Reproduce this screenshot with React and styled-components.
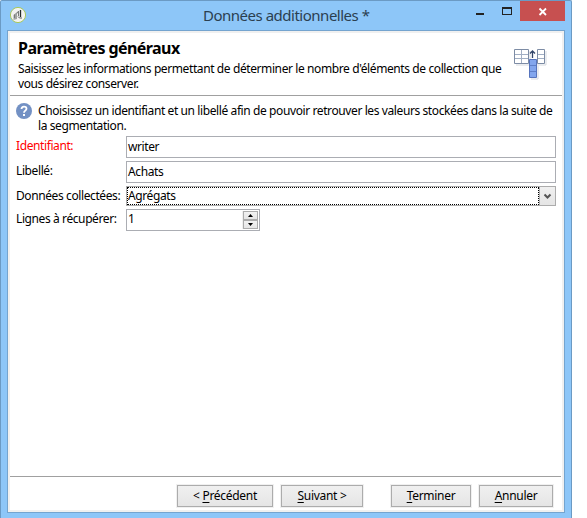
import React from "react";
import styled, { createGlobalStyle } from "styled-components";

const GlobalStyle = createGlobalStyle`
  * { box-sizing: border-box; }
  body {
    margin: 0;
    background: #fff;
    color: #000;
    font: 12px/15px "Noto Sans", "Open Sans", sans-serif;
    letter-spacing: -0.4px;
    overflow: hidden;
  }
`;

const Window = styled.div`
  width: 572px;
  height: 518px;
  display: flex;
  flex-direction: column;
  padding: 0 6px 5px;
  background: #8dc6f8;
  border: 1px solid #6b9ac4;
  border-bottom: 0;
  border-radius: 2px 2px 0 0;
`;

const TitleBar = styled.header`
  height: 29px;
  flex: none;
  display: flex;
  padding-left: 2px;
`;

const AppIcon = styled.svg`
  width: 18px;
  height: 18px;
  margin-top: 5px;
  flex: none;
`;

const Title = styled.h1`
  flex: 1;
  margin: 4px 0 0 176px;
  font: 400 15px/21px "Noto Sans", sans-serif;
  letter-spacing: -0.49px;
  color: #2b3f50;
  white-space: nowrap;
`;

const WindowControls = styled.div`
  display: flex;
  align-items: flex-start;
`;

const ControlButton = styled.button`
  width: ${(p) => p.$width}px;
  height: ${(p) => (p.$close ? 20 : 21)}px;
  padding: 0;
  border: 0;
  display: flex;
  background: ${(p) => (p.$close ? "#c75050" : "transparent")};
`;

const Client = styled.main`
  flex: 1;
  display: flex;
  flex-direction: column;
  border: 1px solid #74a4cf;
  background: #fff;
  box-shadow: inset 0 0 0 2px #f0f0f0;
  padding: 2px;
`;

const Intro = styled.section`
  height: 63px;
  flex: none;
  display: flex;
  justify-content: space-between;
  padding: 5px 13px 0 8px;
  border-bottom: 1px solid #a0a0a0;
`;

const Heading = styled.h2`
  margin: 0 0 3px;
  font: 700 16px/20px "Noto Sans", sans-serif;
  letter-spacing: -0.56px;
`;

const Line = styled.div`
  white-space: nowrap;
`;

const TableIcon = styled.svg`
  width: 36px;
  height: 34px;
  margin-top: 10px;
  flex: none;
`;

const Body = styled.section`
  flex: 1;
  padding: 7px 6px 0;
`;

const Hint = styled.div`
  display: flex;
  height: 33px;
  gap: 6px;
`;

const HelpIcon = styled.svg`
  width: 16px;
  height: 16px;
  flex: none;
`;

const Form = styled.div`
  display: grid;
  grid-template-columns: 110px 430px;
  grid-template-rows: 25px 25px 23px 22px;
  align-items: start;
`;

const Label = styled.label`
  padding-top: 2px;
  white-space: nowrap;
  color: ${(p) => (p.$required ? "#ff0000" : "#000")};
`;

const TextField = styled.div`
  height: 22px;
  padding: 2px 1px;
  border: 1px solid #abadb3;
`;

const Combo = styled.div`
  height: 20px;
  display: flex;
  border: 1px solid #acacac;
`;

const ComboValue = styled.div`
  flex: 1;
  border: 1px dotted #000;
  line-height: 16px;
`;

const ComboButton = styled.div`
  width: 16px;
  border-left: 1px solid #acacac;
  background: linear-gradient(#f0f0f0, #e5e5e5);
`;

const Glyph = styled.svg`
  display: block;
`;

const Spinner = styled.div`
  width: 134px;
  height: 22px;
  display: flex;
  justify-content: space-between;
  padding: 1px;
  border: 1px solid #abadb3;
`;

const SpinButtons = styled.div`
  width: 16px;
  display: grid;
  grid-template-rows: 9px 9px;
  padding-left: 1px;
  background: #f0f0f0;
`;

const SpinButton = styled.div`
  border: 1px solid #acacac;
  background: linear-gradient(#f2f2f2, #e6e6e6);
`;

const Footer = styled.footer`
  height: 34px;
  flex: none;
  display: flex;
  gap: 8px;
  padding: 8px 8px 0;
  margin-right: 1px;
  justify-content: flex-end;
  border-top: 1px solid #a0a0a0;
`;

const Button = styled.button`
  width: ${(p) => p.$width}px;
  height: 22px;
  margin-left: ${(p) => (p.$apart ? 20 : 0)}px;
  padding: 0 0 2px;
  border: 1px solid #acacac;
  background: linear-gradient(#f0f0f0, #e5e5e5);
  box-shadow: 0 0 0 1px #f0f0f0;
  color: #000;
  font: inherit;
  letter-spacing: ${(p) => p.$spacing || 0}px;
  white-space: nowrap;
`;

const Key = styled.span`
  text-decoration: underline;
  text-underline-offset: 2px;
  text-decoration-thickness: 1px;
`;

export default function App() {
  return (
    <>
      <GlobalStyle />
      <Window>
        <TitleBar>
          <AppIcon viewBox="0 0 18 18">
            <circle cx="9" cy="9" r="7.6" fill="#f3f3f1" stroke="#a9c95c" />
            <path d="M4.500 9 8 6v7l-3.500 1z" fill="#a2a4a2" />
            <path d="M5.500 12V8.500M8 7.500 9.500 5v5" fill="none" stroke="#777b79" />
            <path d="M11.500 4v7" stroke="#252a29" strokeWidth="1.300" />
            <path d="m9 10.500 1.500 1.500H13" fill="none" stroke="#60625f" />
          </AppIcon>
          <Title>Données additionnelles *</Title>
          <WindowControls>
            <ControlButton $width={26} aria-label="Réduire">
              <Glyph width="26" height="21"><path d="M8 12h8v2H8z" fill="#222" /></Glyph>
            </ControlButton>
            <ControlButton $width={26} aria-label="Agrandir">
              <Glyph width="26" height="21"><path fillRule="evenodd" d="M8 6h10v8H8zM9 8v5h8V8z" fill="#222" /></Glyph>
            </ControlButton>
            <ControlButton $width={45} $close aria-label="Fermer">
              <Glyph width="45" height="20"><path d="m19.500 7.500 6.500 6.500m0-6.500-6.500 6.500" stroke="#fff" strokeWidth="1.800" /></Glyph>
            </ControlButton>
          </WindowControls>
        </TitleBar>
        <Client>
          <Intro>
            <div>
              <Heading>Paramètres généraux</Heading>
              <Line>Saisissez les informations permettant de déterminer le nombre d'éléments de collection que</Line>
              <Line>vous désirez conserver.</Line>
            </div>
            <TableIcon viewBox="0 0 36 34">
              <path d="M3 17h14V3M26 17h7V3M18 31h7V14" fill="none" stroke="#d5d9df" />
              <path d="M1.500 1.500h14v14h-14zM24.500 1.500h7v14h-7z" fill="#fff" stroke="#7d8ca5" />
              <path d="M2 6.500h13M2 10.500h13M8.500 2v13M25 6.500h6M25 10.500h6" stroke="#a2afc4" />
              <path d="M19.500 10V3.500M17 5.500l2.500-2.500L22 5.500" fill="none" stroke="#324569" strokeWidth="1.300" />
              <path d="M16.500 11.500h7v18h-7z" fill="#82a6ee" stroke="#5674bd" />
              <path d="M17 17.500h6M17 23.500h6" stroke="#5e7fc8" />
            </TableIcon>
          </Intro>
          <Body>
            <Hint>
              <HelpIcon viewBox="0 0 16 16">
                <circle cx="8" cy="8" r="8" fill="#7391c4" />
                <path d="M5.500 6c0-3.200 5-3.200 5-.3C10.500 7.600 8 7.600 8 9.700" fill="none" stroke="#fff" strokeWidth="1.800" />
                <path d="M7 11h2v2H7z" fill="#fff" />
              </HelpIcon>
              <div>
                <Line>Choisissez un identifiant et un libellé afin de pouvoir retrouver les valeurs stockées dans la suite de</Line>
                <Line>la segmentation.</Line>
              </div>
            </Hint>
            <Form>
              <Label $required>Identifiant:</Label>
              <TextField>writer</TextField>
              <Label>Libellé:</Label>
              <TextField>Achats</TextField>
              <Label>Données collectées:</Label>
              <Combo>
                <ComboValue>Agrégats</ComboValue>
                <ComboButton>
                  <Glyph width="15" height="18"><path d="m4.500 7.500 3 3 3-3" fill="none" stroke="#555" strokeWidth="2" /></Glyph>
                </ComboButton>
              </Combo>
              <Label>Lignes à récupérer:</Label>
              <Spinner>
                <span>1</span>
                <SpinButtons>
                  <SpinButton><Glyph width="13" height="7"><path d="M4 5h5L6.500 2z" /></Glyph></SpinButton>
                  <SpinButton><Glyph width="13" height="7"><path d="M4 2h5L6.500 5z" /></Glyph></SpinButton>
                </SpinButtons>
              </Spinner>
            </Form>
          </Body>
          <Footer>
            <Button $width={96} $spacing={-0.3}>&lt; <Key>P</Key>récédent</Button>
            <Button $width={82} $spacing={-0.3}><Key>S</Key>uivant &gt;</Button>
            <Button $width={80} $spacing={-0.3} $apart><Key>T</Key>erminer</Button>
            <Button $width={74} $spacing={-0.3}><Key>A</Key>nnuler</Button>
          </Footer>
        </Client>
      </Window>
    </>
  );
}
